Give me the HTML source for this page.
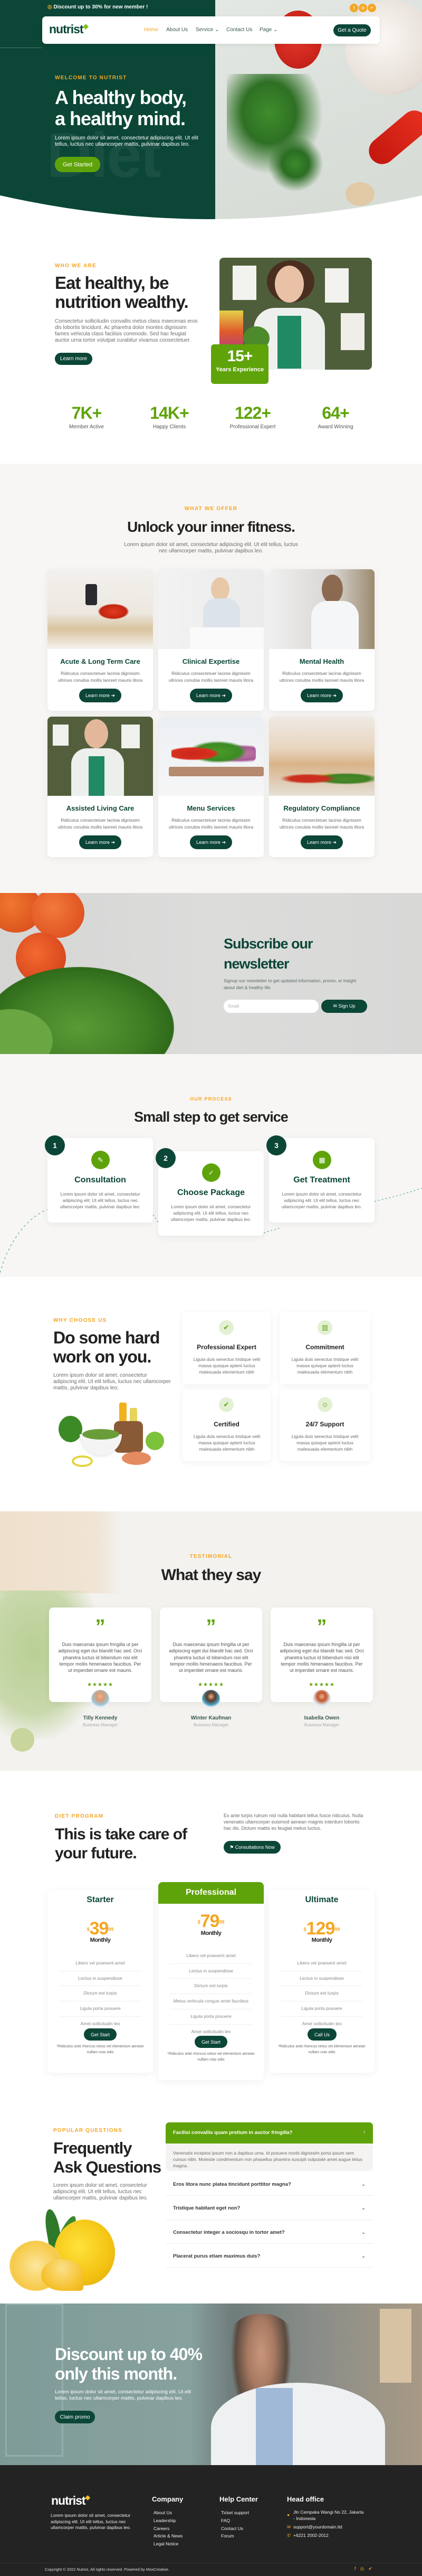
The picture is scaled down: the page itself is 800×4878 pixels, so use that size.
<!DOCTYPE html>
<html><head><meta charset="utf-8"><style>
*{box-sizing:border-box;margin:0;padding:0}
body{width:800px;height:4878px;position:relative;font-family:"Liberation Sans",sans-serif;background:#fff;overflow:hidden;color:#222}
.a{position:absolute}
.h{font-weight:700;letter-spacing:-1px;color:#222}
.tag{font-size:10px;font-weight:700;letter-spacing:1.2px;color:#f5a623}
.p{font-size:10px;line-height:12px;color:#6b6b6b}
.btn{position:absolute;background:#0b4637;color:#fff;border-radius:14px;font-size:10px;display:flex;align-items:center;justify-content:center}
.card{position:absolute;background:#fff;border-radius:8px;box-shadow:0 3px 14px rgba(0,0,0,.06);overflow:hidden}
.c{text-align:center}
</style></head><body>

<!-- HERO -->
<div class="a" style="left:0;top:0;width:800px;height:460px;clip-path:path('M0 0 H800 V370 Q400 460 0 370 Z');">
 <div class="a" style="left:0;top:0;width:408px;height:460px;background:#0b4637"></div>
 <div class="a" style="left:408px;top:0;width:392px;height:460px;background:linear-gradient(160deg,#e4e8e4,#d9ded9 60%,#d5dad4)"></div>
 <div class="a" style="left:520px;top:20px;width:90px;height:110px;border-radius:50%;background:radial-gradient(circle at 45% 45%,#e8382c,#b81a12)"></div>
 <div class="a" style="left:655px;top:0;width:170px;height:180px;border-radius:50%;background:radial-gradient(circle at 40% 40%,#fbf8f4,#e5ddd6 70%,#c9b9b4)"></div>
 <div class="a" style="left:690px;top:235px;width:130px;height:50px;border-radius:30px;background:linear-gradient(90deg,#c4170f,#e6301f);transform:rotate(-40deg)"></div>
 <div class="a" style="left:430px;top:140px;width:200px;height:210px;background:radial-gradient(ellipse at 40% 35%,#3f8d2c 0,#2e7024 30%,transparent 60%)"></div>
 <div class="a" style="left:500px;top:250px;width:120px;height:120px;background:radial-gradient(ellipse,#3c8a2b 0,#2b6d22 30%,transparent 62%)"></div>
 <div class="a" style="left:655px;top:345px;width:55px;height:45px;border-radius:50%;background:#e0c9a4"></div>
 <div class="a" style="left:88px;top:225px;font-size:120px;font-weight:700;color:rgba(255,255,255,.06);letter-spacing:-3px">Diet</div>
</div>
<div class="a" style="left:0;top:90px;width:80px;height:1px;background:#3f7a6a"></div>
<div class="a" style="left:90px;top:8px;font-size:10px;font-weight:700;color:#fff"><span style="color:#f5a623">◎</span> Discount up to 30% for new member !</div>
<div class="a" style="left:663px;top:7px;width:16px;height:16px;border-radius:50%;background:#f5a623;color:#fff;font-size:9px;text-align:center;line-height:16px">f</div>
<div class="a" style="left:680px;top:7px;width:16px;height:16px;border-radius:50%;background:#f5a623;color:#fff;font-size:8px;text-align:center;line-height:16px">◎</div>
<div class="a" style="left:697px;top:7px;width:16px;height:16px;border-radius:50%;background:#f5a623;color:#fff;font-size:8px;text-align:center;line-height:16px">✔</div>
<div class="a" style="left:80px;top:31px;width:640px;height:52px;background:#fff;border-radius:7px;box-shadow:0 2px 8px rgba(0,0,0,.08)">
 <div class="a" style="left:13px;top:11px;font-size:23px;font-weight:700;color:#0b4637;letter-spacing:-1px">nutrist<span style="color:#7bc11c;font-size:13px;vertical-align:top">◆</span></div>
 <div class="a" style="left:193px;top:20px;font-size:10px;color:#f5a623">Home</div>
 <div class="a" style="left:235px;top:20px;font-size:10px;color:#3a5a50">About Us</div>
 <div class="a" style="left:291px;top:20px;font-size:10px;color:#3a5a50">Service ⌄</div>
 <div class="a" style="left:349px;top:20px;font-size:10px;color:#3a5a50">Contact Us</div>
 <div class="a" style="left:412px;top:20px;font-size:10px;color:#3a5a50">Page ⌄</div>
 <div class="btn" style="left:552px;top:15px;width:71px;height:23px">Get a Quote</div>
</div>
<div class="a tag" style="left:104px;top:142px">WELCOME TO NUTRIST</div>
<div class="a h" style="left:104px;top:165px;font-size:36px;line-height:40px;color:#fff">A healthy body,<br>a healthy mind.</div>
<div class="a" style="left:104px;top:256px;font-size:10px;line-height:12px;color:#fff;width:280px">Lorem ipsum dolor sit amet, consectetur adipiscing elit. Ut elit tellus, luctus nec ullamcorper mattis, pulvinar dapibus leo.</div>
<div class="btn" style="left:104px;top:297px;width:86px;height:29px;background:#5fa30a;font-size:11px">Get Started</div>

<!-- WHO WE ARE -->
<div class="a tag" style="left:104px;top:498px">WHO WE ARE</div>
<div class="a h" style="left:104px;top:518px;font-size:33px;line-height:36px">Eat healthy, be<br>nutrition wealthy.</div>
<div class="a p" style="left:104px;top:603px;width:275px">Consectetur sollicitudin convallis metus class maecenas eros dis lobortis tincidunt. Ac pharetra dolor montes dignissim fames vehicula class facilisis commodo. Sed hac feugiat auctor urna tortor volutpat curabitur vivamus consectetuer.</div>
<div class="btn" style="left:104px;top:668px;width:71px;height:23px">Learn more</div>
<div class="a" style="left:416px;top:488px;width:289px;height:212px;border-radius:8px;overflow:hidden;background:#4f5e3a">
 <div class="a" style="left:25px;top:15px;width:45px;height:65px;background:#f2f2ee"></div>
 <div class="a" style="left:200px;top:20px;width:45px;height:65px;background:#f2f2ee"></div>
 <div class="a" style="left:230px;top:105px;width:45px;height:70px;background:#f0eee8"></div>
 <div class="a" style="left:0;top:100px;width:45px;height:80px;background:linear-gradient(#e4d14a,#e05a2a,#b13a8a)"></div>
 <div class="a" style="left:90px;top:5px;width:90px;height:80px;border-radius:50%;background:#4a2e20"></div>
 <div class="a" style="left:105px;top:15px;width:55px;height:70px;border-radius:50%;background:#e9c1a6"></div>
 <div class="a" style="left:65px;top:95px;width:135px;height:120px;border-radius:40px 40px 0 0;background:#eef0ee"></div>
 <div class="a" style="left:110px;top:110px;width:45px;height:100px;background:#1f8a63"></div>
 <div class="a" style="left:45px;top:130px;width:50px;height:45px;border-radius:50%;background:#4d8a2c"></div>
</div>
<div class="a" style="left:400px;top:652px;width:109px;height:75px;background:#5fa30a;border-radius:6px;color:#fff;text-align:center">
 <div style="font-size:30px;font-weight:700;margin-top:6px;letter-spacing:-1px">15+</div>
 <div style="font-size:11px;font-weight:700;margin-top:2px">Years Experience</div>
</div>
<div class="a c" style="left:104px;top:764px;width:120px"><div style="font-size:32px;font-weight:700;color:#5fa30a;letter-spacing:-1px">7K+</div><div style="font-size:10px;color:#555;margin-top:2px">Member Active</div></div>
<div class="a c" style="left:261px;top:764px;width:120px"><div style="font-size:32px;font-weight:700;color:#5fa30a;letter-spacing:-1px">14K+</div><div style="font-size:10px;color:#555;margin-top:2px">Happy Clients</div></div>
<div class="a c" style="left:419px;top:764px;width:120px"><div style="font-size:32px;font-weight:700;color:#5fa30a;letter-spacing:-1px">122+</div><div style="font-size:10px;color:#555;margin-top:2px">Professional Expert</div></div>
<div class="a c" style="left:576px;top:764px;width:120px"><div style="font-size:32px;font-weight:700;color:#5fa30a;letter-spacing:-1px">64+</div><div style="font-size:10px;color:#555;margin-top:2px">Award Winning</div></div>

<!-- OFFER -->
<div class="a" style="left:0;top:878px;width:800px;height:1540px;background:#f7f6f4"></div>
<div class="a tag c" style="left:0;top:958px;width:800px">WHAT WE OFFER</div>
<div class="a h c" style="left:0;top:982px;width:800px;font-size:28px">Unlock your inner fitness.</div>
<div class="a p c" style="left:230px;top:1026px;width:340px">Lorem ipsum dolor sit amet, consectetur adipiscing elit. Ut elit tellus, luctus nec ullamcorper mattis, pulvinar dapibus leo.</div>

<div class="card" style="left:90px;top:1078px;width:200px;height:268px"><div style="height:151px;background:linear-gradient(180deg,#f3f1ee 0,#ece7df 55%,#d9c4a0 75%,#f4f2ef 100%);position:relative"><div class="a" style="left:95px;top:65px;width:60px;height:30px;border-radius:50%;background:radial-gradient(#e23a22,#c2250f 60%,transparent 70%)"></div><div class="a" style="left:72px;top:28px;width:22px;height:40px;border-radius:4px;background:#2a2a30"></div></div></div>
<div class="card" style="left:300px;top:1078px;width:200px;height:268px"><div style="height:151px;background:linear-gradient(90deg,#f2f2f2,#ebebeb);position:relative"><div class="a" style="left:100px;top:15px;width:35px;height:45px;border-radius:50%;background:#e7c9a8"></div><div class="a" style="left:85px;top:55px;width:70px;height:70px;border-radius:25px 25px 0 0;background:#dde3ea"></div><div class="a" style="left:60px;top:110px;width:140px;height:41px;background:#fafafa"></div></div></div>
<div class="card" style="left:510px;top:1078px;width:200px;height:268px"><div style="height:151px;background:linear-gradient(90deg,#f0f0f0,#d8d6d2 60%,#9c8a70);position:relative"><div class="a" style="left:100px;top:10px;width:40px;height:55px;border-radius:50%;background:#8c6a52"></div><div class="a" style="left:80px;top:60px;width:90px;height:91px;border-radius:30px 30px 0 0;background:#f5f6f8"></div></div></div>
<div class="card" style="left:90px;top:1357px;width:200px;height:266px"><div style="height:150px;background:#535f3c;position:relative"><div class="a" style="left:70px;top:5px;width:45px;height:55px;border-radius:50%;background:#e3b79a"></div><div class="a" style="left:45px;top:60px;width:100px;height:90px;border-radius:30px 30px 0 0;background:#ecefec"></div><div class="a" style="left:78px;top:75px;width:30px;height:75px;background:#1f8a63"></div><div class="a" style="left:10px;top:15px;width:30px;height:40px;background:#f0f0ec"></div><div class="a" style="left:140px;top:15px;width:35px;height:45px;background:#f0f0ec"></div></div></div>
<div class="card" style="left:300px;top:1357px;width:200px;height:266px"><div style="height:150px;background:linear-gradient(#eceff2,#f6f6f7);position:relative"><div class="a" style="left:25px;top:40px;width:160px;height:60px;border-radius:40%;background:radial-gradient(ellipse at 25% 50%,#c9261a 0,#d8301f 25%,transparent 30%),radial-gradient(ellipse at 55% 45%,#4b9a2a 0,#3c8a24 35%,transparent 45%),radial-gradient(ellipse at 80% 50%,#c77aa8 0,#a55a92 30%,transparent 40%)"></div><div class="a" style="left:20px;top:95px;width:180px;height:18px;background:#b58a6e;border-radius:3px"></div></div></div>
<div class="card" style="left:510px;top:1357px;width:200px;height:266px"><div style="height:150px;background:linear-gradient(#efe9e3,#e8d6c0 40%,#d9b48a 60%,#e5dfd6);position:relative"><div class="a" style="left:20px;top:95px;width:180px;height:45px;background:radial-gradient(ellipse at 30% 50%,#d22a1d 0,#c8321e 20%,transparent 30%),radial-gradient(ellipse at 70% 50%,#4c8b2a 0,#3f7f23 25%,transparent 35%),radial-gradient(ellipse at 50% 40%,#e2a92a 0,transparent 20%)"></div></div></div>

<div class="a c" style="left:90px;top:1245px;width:200px;font-size:13px;font-weight:700;color:#0b4637">Acute &amp; Long Term Care</div>
<div class="a c" style="left:300px;top:1245px;width:200px;font-size:13px;font-weight:700;color:#0b4637">Clinical Expertise</div>
<div class="a c" style="left:510px;top:1245px;width:200px;font-size:13px;font-weight:700;color:#0b4637">Mental Health</div>
<div class="a c" style="left:90px;top:1523px;width:200px;font-size:13px;font-weight:700;color:#0b4637">Assisted Living Care</div>
<div class="a c" style="left:300px;top:1523px;width:200px;font-size:13px;font-weight:700;color:#0b4637">Menu Services</div>
<div class="a c" style="left:510px;top:1523px;width:200px;font-size:13px;font-weight:700;color:#0b4637">Regulatory Compliance</div>
<div class="a p c" style="left:105px;top:1269px;width:170px;font-size:8.5px;line-height:13px">Ridiculus consectetuer lacinia dignissim ultrices conubia mollis laoreet mauris litora</div>
<div class="a p c" style="left:315px;top:1269px;width:170px;font-size:8.5px;line-height:13px">Ridiculus consectetuer lacinia dignissim ultrices conubia mollis laoreet mauris litora</div>
<div class="a p c" style="left:525px;top:1269px;width:170px;font-size:8.5px;line-height:13px">Ridiculus consectetuer lacinia dignissim ultrices conubia mollis laoreet mauris litora</div>
<div class="a p c" style="left:105px;top:1547px;width:170px;font-size:8.5px;line-height:13px">Ridiculus consectetuer lacinia dignissim ultrices conubia mollis laoreet mauris litora</div>
<div class="a p c" style="left:315px;top:1547px;width:170px;font-size:8.5px;line-height:13px">Ridiculus consectetuer lacinia dignissim ultrices conubia mollis laoreet mauris litora</div>
<div class="a p c" style="left:525px;top:1547px;width:170px;font-size:8.5px;line-height:13px">Ridiculus consectetuer lacinia dignissim ultrices conubia mollis laoreet mauris litora</div>
<div class="btn" style="left:150px;top:1304px;width:80px;height:26px;font-size:9px">Learn more ➔</div>
<div class="btn" style="left:360px;top:1304px;width:80px;height:26px;font-size:9px">Learn more ➔</div>
<div class="btn" style="left:570px;top:1304px;width:80px;height:26px;font-size:9px">Learn more ➔</div>
<div class="btn" style="left:150px;top:1582px;width:80px;height:26px;font-size:9px">Learn more ➔</div>
<div class="btn" style="left:360px;top:1582px;width:80px;height:26px;font-size:9px">Learn more ➔</div>
<div class="btn" style="left:570px;top:1582px;width:80px;height:26px;font-size:9px">Learn more ➔</div>

<!-- NEWSLETTER -->
<div class="a" style="left:0;top:1691px;width:800px;height:305px;background:linear-gradient(90deg,#d5d5d4,#dcdcdb 50%,#d8d8d7);overflow:hidden">
 <div class="a" style="left:-20px;top:-15px;width:100px;height:90px;border-radius:50%;background:radial-gradient(circle at 40% 40%,#f0782e,#d44418)"></div>
 <div class="a" style="left:60px;top:-10px;width:100px;height:95px;border-radius:50%;background:radial-gradient(circle at 40% 40%,#f27a3a,#d9461b)"></div>
 <div class="a" style="left:30px;top:75px;width:95px;height:95px;border-radius:50%;background:radial-gradient(circle at 40% 40%,#f36a30,#cf3a16)"></div>
 <div class="a" style="left:5px;top:170px;width:95px;height:85px;border-radius:50%;background:radial-gradient(circle at 40% 40%,#e85a2a,#c2361a)"></div>
 <div class="a" style="left:-30px;top:140px;width:360px;height:230px;border-radius:50%;background:radial-gradient(ellipse at 50% 50%,#5b9a36,#3f7d24 50%,#2f6a1a 70%,transparent 72%)"></div>
 <div class="a" style="left:-60px;top:220px;width:160px;height:120px;border-radius:50%;background:#6aa743"></div>
</div>
<div class="a h" style="left:424px;top:1768px;font-size:27px;line-height:38px;color:#0b4637">Subscribe our<br>newsletter</div>
<div class="a" style="left:424px;top:1851px;width:270px;font-size:8.5px;line-height:13px;color:#5a6a64">Signup our newsletter to get updated information, promo, or insight about diet &amp; healthy life.</div>
<div class="a" style="left:424px;top:1893px;width:180px;height:25px;background:#fff;border-radius:13px;font-size:8px;color:#aaa;padding:8px 0 0 9px">Email</div>
<div class="btn" style="left:609px;top:1893px;width:87px;height:25px;font-size:9px">✉ Sign Up</div>

<!-- PROCESS -->
<div class="a tag c" style="left:0;top:2076px;width:800px;font-size:9px">OUR PROCESS</div>
<div class="a h c" style="left:0;top:2100px;width:800px;font-size:27px">Small step to get service</div>
<svg class="a" style="left:0;top:2140px" width="800" height="280"><path d="M0 270 C20 200 60 160 92 150" stroke="#3aa089" stroke-width="1" stroke-dasharray="4 5" fill="none"/><path d="M290 160 C300 175 300 175 300 175" stroke="#3aa089" stroke-dasharray="3 4" fill="none"/><path d="M500 195 C510 190 520 190 530 185" stroke="#3aa089" stroke-dasharray="3 4" fill="none"/><path d="M710 135 C740 128 770 120 800 110" stroke="#3aa089" stroke-dasharray="3 4" fill="none"/></svg>
<div class="card" style="left:90px;top:2155px;width:200px;height:160px"></div>
<div class="card" style="left:300px;top:2180px;width:200px;height:160px"></div>
<div class="card" style="left:510px;top:2155px;width:200px;height:160px"></div>
<div class="a c" style="left:85px;top:2150px;width:38px;height:38px;border-radius:50%;background:#0b4637;color:#fff;font-weight:700;font-size:14px;line-height:38px">1</div>
<div class="a c" style="left:295px;top:2174px;width:38px;height:38px;border-radius:50%;background:#0b4637;color:#fff;font-weight:700;font-size:14px;line-height:38px">2</div>
<div class="a c" style="left:505px;top:2150px;width:38px;height:38px;border-radius:50%;background:#0b4637;color:#fff;font-weight:700;font-size:14px;line-height:38px">3</div>
<div class="a c" style="left:173px;top:2179px;width:35px;height:35px;border-radius:50%;background:#5fa30a;color:#fff;font-size:13px;line-height:35px">✎</div>
<div class="a c" style="left:383px;top:2203px;width:35px;height:35px;border-radius:50%;background:#5fa30a;color:#fff;font-size:13px;line-height:35px">✓</div>
<div class="a c" style="left:593px;top:2179px;width:35px;height:35px;border-radius:50%;background:#5fa30a;color:#fff;font-size:13px;line-height:35px">▦</div>
<div class="a c" style="left:90px;top:2226px;width:200px;font-size:16px;font-weight:700;color:#0b4637">Consultation</div>
<div class="a c" style="left:300px;top:2250px;width:200px;font-size:16px;font-weight:700;color:#0b4637">Choose Package</div>
<div class="a c" style="left:510px;top:2226px;width:200px;font-size:16px;font-weight:700;color:#0b4637">Get Treatment</div>
<div class="a p c" style="left:110px;top:2255px;width:160px;font-size:8.5px">Lorem ipsum dolor sit amet, consectetur adipiscing elit. Ut elit tellus, luctus nec ullamcorper mattis, pulvinar dapibus leo.</div>
<div class="a p c" style="left:320px;top:2279px;width:160px;font-size:8.5px">Lorem ipsum dolor sit amet, consectetur adipiscing elit. Ut elit tellus, luctus nec ullamcorper mattis, pulvinar dapibus leo.</div>
<div class="a p c" style="left:530px;top:2255px;width:160px;font-size:8.5px">Lorem ipsum dolor sit amet, consectetur adipiscing elit. Ut elit tellus, luctus nec ullamcorper mattis, pulvinar dapibus leo.</div>

<!-- WHY -->
<div class="a tag" style="left:101px;top:2495px">WHY CHOOSE US</div>
<div class="a h" style="left:101px;top:2515px;font-size:32px;line-height:36px">Do some hard<br>work on you.</div>
<div class="a p" style="left:101px;top:2599px;width:225px">Lorem ipsum dolor sit amet, consectetur adipiscing elit. Ut elit tellus, luctus nec ullamcorper mattis, pulvinar dapibus leo.</div>
<div class="a" style="left:101px;top:2641px;width:219px;height:144px;background:#fff">
 <div class="a" style="left:10px;top:40px;width:45px;height:50px;border-radius:50%;background:#3c8a26"></div>
 <div class="a" style="left:125px;top:15px;width:14px;height:55px;border-radius:3px;background:#f0b11c"></div>
 <div class="a" style="left:145px;top:25px;width:14px;height:45px;border-radius:3px;background:#e6d35a"></div>
 <div class="a" style="left:115px;top:50px;width:55px;height:60px;border-radius:10px;background:#8a5a36"></div>
 <div class="a" style="left:175px;top:70px;width:35px;height:35px;border-radius:50%;background:#7cc23a"></div>
 <div class="a" style="left:50px;top:75px;width:80px;height:40px;border-radius:0 0 40px 40px;background:#f4f4f4;box-shadow:0 2px 4px rgba(0,0,0,.1)"></div>
 <div class="a" style="left:55px;top:65px;width:70px;height:20px;border-radius:50%;background:#6a9d3a"></div>
 <div class="a" style="left:130px;top:108px;width:55px;height:25px;border-radius:50%;background:#e58b62"></div>
 <div class="a" style="left:35px;top:115px;width:40px;height:22px;border-radius:50%;border:4px solid #e4d33a"></div>
</div>
<div class="card" style="left:346px;top:2485px;width:167px;height:136px"></div>
<div class="card" style="left:530px;top:2485px;width:172px;height:136px"></div>
<div class="card" style="left:346px;top:2631px;width:167px;height:136px"></div>
<div class="card" style="left:530px;top:2631px;width:172px;height:136px"></div>
<div class="a c" style="left:415px;top:2500px;width:28px;height:28px;border-radius:50%;background:#e3f0d3;color:#5fa30a;font-size:13px;line-height:28px">✔</div>
<div class="a c" style="left:602px;top:2500px;width:28px;height:28px;border-radius:50%;background:#e3f0d3;color:#5fa30a;font-size:13px;line-height:28px">▥</div>
<div class="a c" style="left:415px;top:2646px;width:28px;height:28px;border-radius:50%;background:#e3f0d3;color:#5fa30a;font-size:13px;line-height:28px">✔</div>
<div class="a c" style="left:602px;top:2646px;width:28px;height:28px;border-radius:50%;background:#e3f0d3;color:#5fa30a;font-size:13px;line-height:28px">☺</div>
<div class="a c" style="left:346px;top:2544px;width:167px;font-size:12px;font-weight:700">Professional Expert</div>
<div class="a c" style="left:530px;top:2544px;width:172px;font-size:12px;font-weight:700">Commitment</div>
<div class="a c" style="left:346px;top:2690px;width:167px;font-size:12px;font-weight:700">Certified</div>
<div class="a c" style="left:530px;top:2690px;width:172px;font-size:12px;font-weight:700">24/7 Support</div>
<div class="a p c" style="left:365px;top:2568px;width:130px;font-size:8.5px">Ligula duis senectus tristique velit massa quisque aptent luctus malesuada elementum nibh</div>
<div class="a p c" style="left:551px;top:2568px;width:130px;font-size:8.5px">Ligula duis senectus tristique velit massa quisque aptent luctus malesuada elementum nibh</div>
<div class="a p c" style="left:365px;top:2714px;width:130px;font-size:8.5px">Ligula duis senectus tristique velit massa quisque aptent luctus malesuada elementum nibh</div>
<div class="a p c" style="left:551px;top:2714px;width:130px;font-size:8.5px">Ligula duis senectus tristique velit massa quisque aptent luctus malesuada elementum nibh</div>

<!-- TESTIMONIAL -->
<div class="a" style="left:0;top:2862px;width:800px;height:491px;background:#f3f2ef;overflow:hidden">
 <div class="a" style="left:0;top:0;width:230px;height:155px;background:linear-gradient(90deg,#efe0cc,#f0e4d4 80%,#f3f2ef)"></div>
 <div class="a" style="left:-20px;top:150px;width:210px;height:280px;background:radial-gradient(ellipse at 40% 40%,#b9cf95,#c9d8ab 50%,rgba(243,242,239,0) 75%)"></div>
 <div class="a" style="left:20px;top:410px;width:45px;height:45px;border-radius:50%;background:#c8d59c"></div>
</div>
<div class="a tag c" style="left:0;top:2942px;width:800px">TESTIMONIAL</div>
<div class="a h c" style="left:0;top:2966px;width:800px;font-size:30px">What they say</div>
<div class="card" style="left:93px;top:3044px;width:194px;height:179px"></div>
<div class="card" style="left:303px;top:3044px;width:194px;height:179px"></div>
<div class="card" style="left:513px;top:3044px;width:194px;height:179px"></div>
<div class="a c" style="left:93px;top:3060px;width:194px;font-size:38px;font-weight:700;color:#5fa30a">”</div>
<div class="a c" style="left:303px;top:3060px;width:194px;font-size:38px;font-weight:700;color:#5fa30a">”</div>
<div class="a c" style="left:513px;top:3060px;width:194px;font-size:38px;font-weight:700;color:#5fa30a">”</div>
<div class="a p c" style="left:110px;top:3108px;width:160px;font-size:9px;line-height:12.3px;color:#555">Duis maecenas ipsum fringilla ut per adipiscing eget dui blandit hac sed. Orci pharetra luctus id bibendum nisi elit tempor mollis himenaeos faucibus. Per ut imperdiet ornare est mauris.</div>
<div class="a p c" style="left:320px;top:3108px;width:160px;font-size:9px;line-height:12.3px;color:#555">Duis maecenas ipsum fringilla ut per adipiscing eget dui blandit hac sed. Orci pharetra luctus id bibendum nisi elit tempor mollis himenaeos faucibus. Per ut imperdiet ornare est mauris.</div>
<div class="a p c" style="left:530px;top:3108px;width:160px;font-size:9px;line-height:12.3px;color:#555">Duis maecenas ipsum fringilla ut per adipiscing eget dui blandit hac sed. Orci pharetra luctus id bibendum nisi elit tempor mollis himenaeos faucibus. Per ut imperdiet ornare est mauris.</div>
<div class="a c" style="left:93px;top:3185px;width:194px;font-size:10px;color:#5fa30a;letter-spacing:1px">★★★★★</div>
<div class="a c" style="left:303px;top:3185px;width:194px;font-size:10px;color:#5fa30a;letter-spacing:1px">★★★★★</div>
<div class="a c" style="left:513px;top:3185px;width:194px;font-size:10px;color:#5fa30a;letter-spacing:1px">★★★★★</div>
<div class="a" style="left:173px;top:3200px;width:34px;height:36px;border-radius:50%;background:radial-gradient(circle at 50% 35%,#e9b995 0,#d99a72 25%,#9bc6d8 55%,#eef1f3 70%)"></div>
<div class="a" style="left:383px;top:3200px;width:34px;height:36px;border-radius:50%;background:radial-gradient(circle at 50% 35%,#e2b08c 0,#5a3a2a 28%,#4aa0c0 55%,#eef1f3 70%)"></div>
<div class="a" style="left:593px;top:3200px;width:34px;height:36px;border-radius:50%;background:radial-gradient(circle at 50% 35%,#e8b493 0,#c2522a 28%,#dde4ea 55%,#eef1f3 70%)"></div>
<div class="a c" style="left:93px;top:3248px;width:194px;font-size:10px;font-weight:700;color:#3a5a50">Tilly Kennedy</div>
<div class="a c" style="left:303px;top:3248px;width:194px;font-size:10px;font-weight:700;color:#3a5a50">Winter Kaufman</div>
<div class="a c" style="left:513px;top:3248px;width:194px;font-size:10px;font-weight:700;color:#3a5a50">Isabella Owen</div>
<div class="a c" style="left:93px;top:3262px;width:194px;font-size:8px;color:#aaa">Business Manager</div>
<div class="a c" style="left:303px;top:3262px;width:194px;font-size:8px;color:#aaa">Business Manager</div>
<div class="a c" style="left:513px;top:3262px;width:194px;font-size:8px;color:#aaa">Business Manager</div>

<!-- PRICING -->
<div class="a tag" style="left:104px;top:3434px">DIET PROGRAM</div>
<div class="a h" style="left:104px;top:3456px;font-size:30px;line-height:36px">This is take care of<br>your future.</div>
<div class="a p" style="left:424px;top:3432px;width:270px;line-height:12px;font-size:9px">Ex ante turpis rutrum nisl nulla habitant tellus fusce ridiculus. Nulla venenatis ullamcorper euismod aenean magnis interdum lobortis hac dis. Dictum mattis ex feugiat metus luctus.</div>
<div class="btn" style="left:424px;top:3486px;width:108px;height:24px;font-size:9px">⚑ Consultations Now</div>

<div class="card" style="left:90px;top:3578px;width:200px;height:347px"></div>
<div class="card" style="left:300px;top:3564px;width:200px;height:375px"><div style="height:41px;background:#5fa30a"></div></div>
<div class="card" style="left:510px;top:3578px;width:200px;height:347px"></div>
<div class="a c" style="left:90px;top:3589px;width:200px;font-size:16px;font-weight:700;color:#0b4637">Starter</div>
<div class="a c" style="left:300px;top:3575px;width:200px;font-size:16px;font-weight:700;color:#fff">Professional</div>
<div class="a c" style="left:510px;top:3589px;width:200px;font-size:16px;font-weight:700;color:#0b4637">Ultimate</div>
<div class="a c" style="left:90px;top:3633px;width:200px;color:#f5a623;font-weight:700"><sup style="font-size:9px">$</sup><span style="font-size:34px;letter-spacing:-1px">39</span><sup style="font-size:9px">99</sup></div>
<div class="a c" style="left:300px;top:3619px;width:200px;color:#f5a623;font-weight:700"><sup style="font-size:9px">$</sup><span style="font-size:34px;letter-spacing:-1px">79</span><sup style="font-size:9px">99</sup></div>
<div class="a c" style="left:510px;top:3633px;width:200px;color:#f5a623;font-weight:700"><sup style="font-size:9px">$</sup><span style="font-size:34px;letter-spacing:-1px">129</span><sup style="font-size:9px">99</sup></div>
<div class="a c" style="left:90px;top:3668px;width:200px;font-size:11px;font-weight:700;letter-spacing:-.5px">Monthly</div>
<div class="a c" style="left:300px;top:3655px;width:200px;font-size:11px;font-weight:700;letter-spacing:-.5px">Monthly</div>
<div class="a c" style="left:510px;top:3668px;width:200px;font-size:11px;font-weight:700;letter-spacing:-.5px">Monthly</div>
<div class="a c" style="left:112px;top:3704px;width:156px;font-size:8.5px;color:#888;line-height:27.7px">
 <div style="border-bottom:1px solid #f0f0f0">Libero vel praesent amet</div><div style="border-bottom:1px solid #f0f0f0">Lectus in suspendisse</div><div style="border-bottom:1px solid #f0f0f0">Dictum est turpis</div><div style="border-bottom:1px solid #f0f0f0">Ligula porta posuere</div><div>Amet sollicitudin leo</div></div>
<div class="a c" style="left:322px;top:3690px;width:156px;font-size:8.5px;color:#888;line-height:27.7px">
 <div style="border-bottom:1px solid #f0f0f0">Libero vel praesent amet</div><div style="border-bottom:1px solid #f0f0f0">Lectus in suspendisse</div><div style="border-bottom:1px solid #f0f0f0">Dictum est turpis</div><div style="border-bottom:1px solid #f0f0f0">Metus vehicula congue amet faucibus</div><div style="border-bottom:1px solid #f0f0f0">Ligula porta posuere</div><div>Amet sollicitudin leo</div></div>
<div class="a c" style="left:532px;top:3704px;width:156px;font-size:8.5px;color:#888;line-height:27.7px">
 <div style="border-bottom:1px solid #f0f0f0">Libero vel praesent amet</div><div style="border-bottom:1px solid #f0f0f0">Lectus in suspendisse</div><div style="border-bottom:1px solid #f0f0f0">Dictum est turpis</div><div style="border-bottom:1px solid #f0f0f0">Ligula porta posuere</div><div>Amet sollicitudin leo</div></div>
<div class="btn" style="left:159px;top:3841px;width:62px;height:23px;font-size:9px">Get Start</div>
<div class="btn" style="left:369px;top:3855px;width:62px;height:23px;font-size:9px">Get Start</div>
<div class="btn" style="left:583px;top:3841px;width:55px;height:23px;font-size:9px">Call Us</div>
<div class="a c" style="left:100px;top:3870px;width:180px;font-size:7px;line-height:11px;color:#666">*Ridiculus ante rhoncus netus vel elementum aenean nullam cras odio</div>
<div class="a c" style="left:310px;top:3884px;width:180px;font-size:7px;line-height:11px;color:#666">*Ridiculus ante rhoncus netus vel elementum aenean nullam cras odio</div>
<div class="a c" style="left:520px;top:3870px;width:180px;font-size:7px;line-height:11px;color:#666">*Ridiculus ante rhoncus netus vel elementum aenean nullam cras odio</div>

<!-- FAQ -->
<div class="a tag" style="left:101px;top:4029px">POPULAR QUESTIONS</div>
<div class="a h" style="left:101px;top:4050px;font-size:31px;line-height:36px">Frequently<br>Ask Questions</div>
<div class="a p" style="left:101px;top:4133px;width:185px">Lorem ipsum dolor sit amet, consectetur adipiscing elit. Ut elit tellus, luctus nec ullamcorper mattis, pulvinar dapibus leo.</div>
<div class="a" style="left:18px;top:4183px;width:205px;height:155px">
 <div class="a" style="left:70px;top:0;width:25px;height:80px;border-radius:50% 50% 0 0;background:#2f7a2a;transform:rotate(-10deg)"></div>
 <div class="a" style="left:95px;top:10px;width:22px;height:80px;border-radius:50% 50% 0 0;background:#3a8a30;transform:rotate(25deg)"></div>
 <div class="a" style="left:85px;top:20px;width:115px;height:125px;border-radius:50%;background:radial-gradient(circle at 40% 40%,#ffe23a,#f3c313 60%,#e0a50a)"></div>
 <div class="a" style="left:0;top:60px;width:100px;height:95px;border-radius:50%;background:radial-gradient(circle,#fbe79c 0,#f7c948 65%,#f3dc80 80%,#e8b512)"></div>
 <div class="a" style="left:60px;top:95px;width:80px;height:60px;border-radius:50% 50% 10% 50%;background:radial-gradient(circle at 50% 30%,#fbe08a,#f5c02a 70%,#e9b318)"></div>
</div>
<div class="a" style="left:314px;top:4019px;width:393px;height:92px;border-radius:7px;background:#f4f3f1;overflow:hidden">
 <div style="height:40px;background:#5fa30a;color:#fff;font-size:9.5px;font-weight:700;padding:14px 14px;display:flex;justify-content:space-between"><span>Facilisi convallis quam pretium in auctor fringilla?</span><span>↑</span></div>
 <div style="padding:12px 14px;font-size:8.5px;line-height:12px;color:#6b6b6b">Venenatis inceptos ipsum non a dapibus urna. Id posuere morbi dignissim porta ipsum sem cursus nibh. Molestie condimentum non phasellus pharetra suscipit vulputate amet augue letius magna.</div>
</div>
<div class="a" style="left:314px;top:4113px;width:393px;font-size:9.5px;font-weight:700;color:#333">
 <div style="height:45.3px;border-bottom:1px solid #eee;padding:18px 14px 0;display:flex;justify-content:space-between"><span>Eros litora nunc platea tincidunt porttitor magna?</span><span style="font-weight:400">⌄</span></div>
 <div style="height:45.3px;border-bottom:1px solid #eee;padding:18px 14px 0;display:flex;justify-content:space-between"><span>Tristique habitant eget non?</span><span style="font-weight:400">⌄</span></div>
 <div style="height:45.3px;border-bottom:1px solid #eee;padding:18px 14px 0;display:flex;justify-content:space-between"><span>Consectetur integer a sociosqu in tortor amet?</span><span style="font-weight:400">⌄</span></div>
 <div style="height:45.3px;border-bottom:1px solid #eee;padding:18px 14px 0;display:flex;justify-content:space-between"><span>Placerat purus etiam maximus duis?</span><span style="font-weight:400">⌄</span></div>
</div>

<!-- PROMO -->
<div class="a" style="left:0;top:4362px;width:800px;height:306px;background:linear-gradient(90deg,#7f9b98,#87a19e 45%,#6f7d7c 55%,#8a8d88 75%,#a89a85);overflow:hidden">
 <div class="a" style="left:10px;top:0;width:110px;height:290px;border:3px solid #93aeab"></div>
 <div class="a" style="left:405px;top:20px;width:180px;height:300px;border-radius:45% 45% 0 0;background:radial-gradient(ellipse at 50% 25%,#c9967a 0,#a87a62 20%,#5a4a40 38%,transparent 45%)"></div>
 <div class="a" style="left:400px;top:150px;width:330px;height:170px;border-radius:50% 50% 0 0;background:#eef0f2"></div>
 <div class="a" style="left:485px;top:160px;width:70px;height:146px;background:#9fb9d6"></div>
 <div class="a" style="left:600px;top:160px;width:180px;height:150px;background:#8c7558;z-index:-1"></div>
 <div class="a" style="left:720px;top:10px;width:60px;height:140px;background:#d8c2a4"></div>
</div>
<div class="a h" style="left:104px;top:4440px;font-size:32px;line-height:37px;color:#fff">Discount up to 40%<br>only this month.</div>
<div class="a" style="left:104px;top:4524px;width:280px;font-size:9.5px;line-height:12px;color:#fff">Lorem ipsum dolor sit amet, consectetur adipiscing elit. Ut elit tellus, luctus nec ullamcorper mattis, pulvinar dapibus leo.</div>
<div class="btn" style="left:104px;top:4565px;width:76px;height:24px">Claim promo</div>

<!-- FOOTER -->
<div class="a" style="left:0;top:4668px;width:800px;height:210px;background:#232323"></div>
<div class="a" style="left:97px;top:4722px;font-size:23px;font-weight:700;color:#fff;letter-spacing:-1px">nutrist<span style="color:#f5c21b;font-size:12px;vertical-align:top">◆</span></div>
<div class="a" style="left:96px;top:4758px;width:170px;font-size:8.5px;line-height:11.5px;color:#eee">Lorem ipsum dolor sit amet, consectetur adipiscing elit. Ut elit tellus, luctus nec ullamcorper mattis, pulvinar dapibus leo.</div>
<div class="a" style="left:288px;top:4725px;font-size:13px;font-weight:700;color:#fff">Company</div>
<div class="a" style="left:416px;top:4725px;font-size:13px;font-weight:700;color:#fff">Help Center</div>
<div class="a" style="left:544px;top:4725px;font-size:13px;font-weight:700;color:#fff">Head office</div>
<div class="a" style="left:291px;top:4751px;font-size:8.5px;line-height:14.8px;color:#eee">About Us<br>Leadership<br>Careers<br>Article &amp; News<br>Legal Notice</div>
<div class="a" style="left:419px;top:4751px;font-size:8.5px;line-height:14.8px;color:#eee">Ticket support<br>FAQ<br>Contact Us<br>Forum</div>
<div class="a" style="left:544px;top:4751px;font-size:8.5px;line-height:12px;color:#eee;width:150px"><span style="color:#f5a623;position:absolute;left:0;top:5px">●</span><div style="padding-left:12px">Jln Cempaka Wangi No 22, Jakarta - Indonesia</div><div style="padding-left:12px;margin-top:4px"><span style="color:#f5a623;position:absolute;left:0">✉</span>support@yourdomain.tld</div><div style="padding-left:12px;margin-top:4px"><span style="color:#f5a623;position:absolute;left:0">✆</span>+6221 2002-2012</div></div>
<div class="a" style="left:0;top:4853px;width:800px;height:1px;background:#333"></div>
<div class="a" style="left:85px;top:4861px;font-size:7.5px;color:#ddd">Copyright © 2022 Nutrist, All rights reserved. Powered by MoxCreative.</div>
<div class="a" style="left:672px;top:4859px;font-size:9px;color:#f5a623;letter-spacing:8px">f◎✔</div>
</body></html>
